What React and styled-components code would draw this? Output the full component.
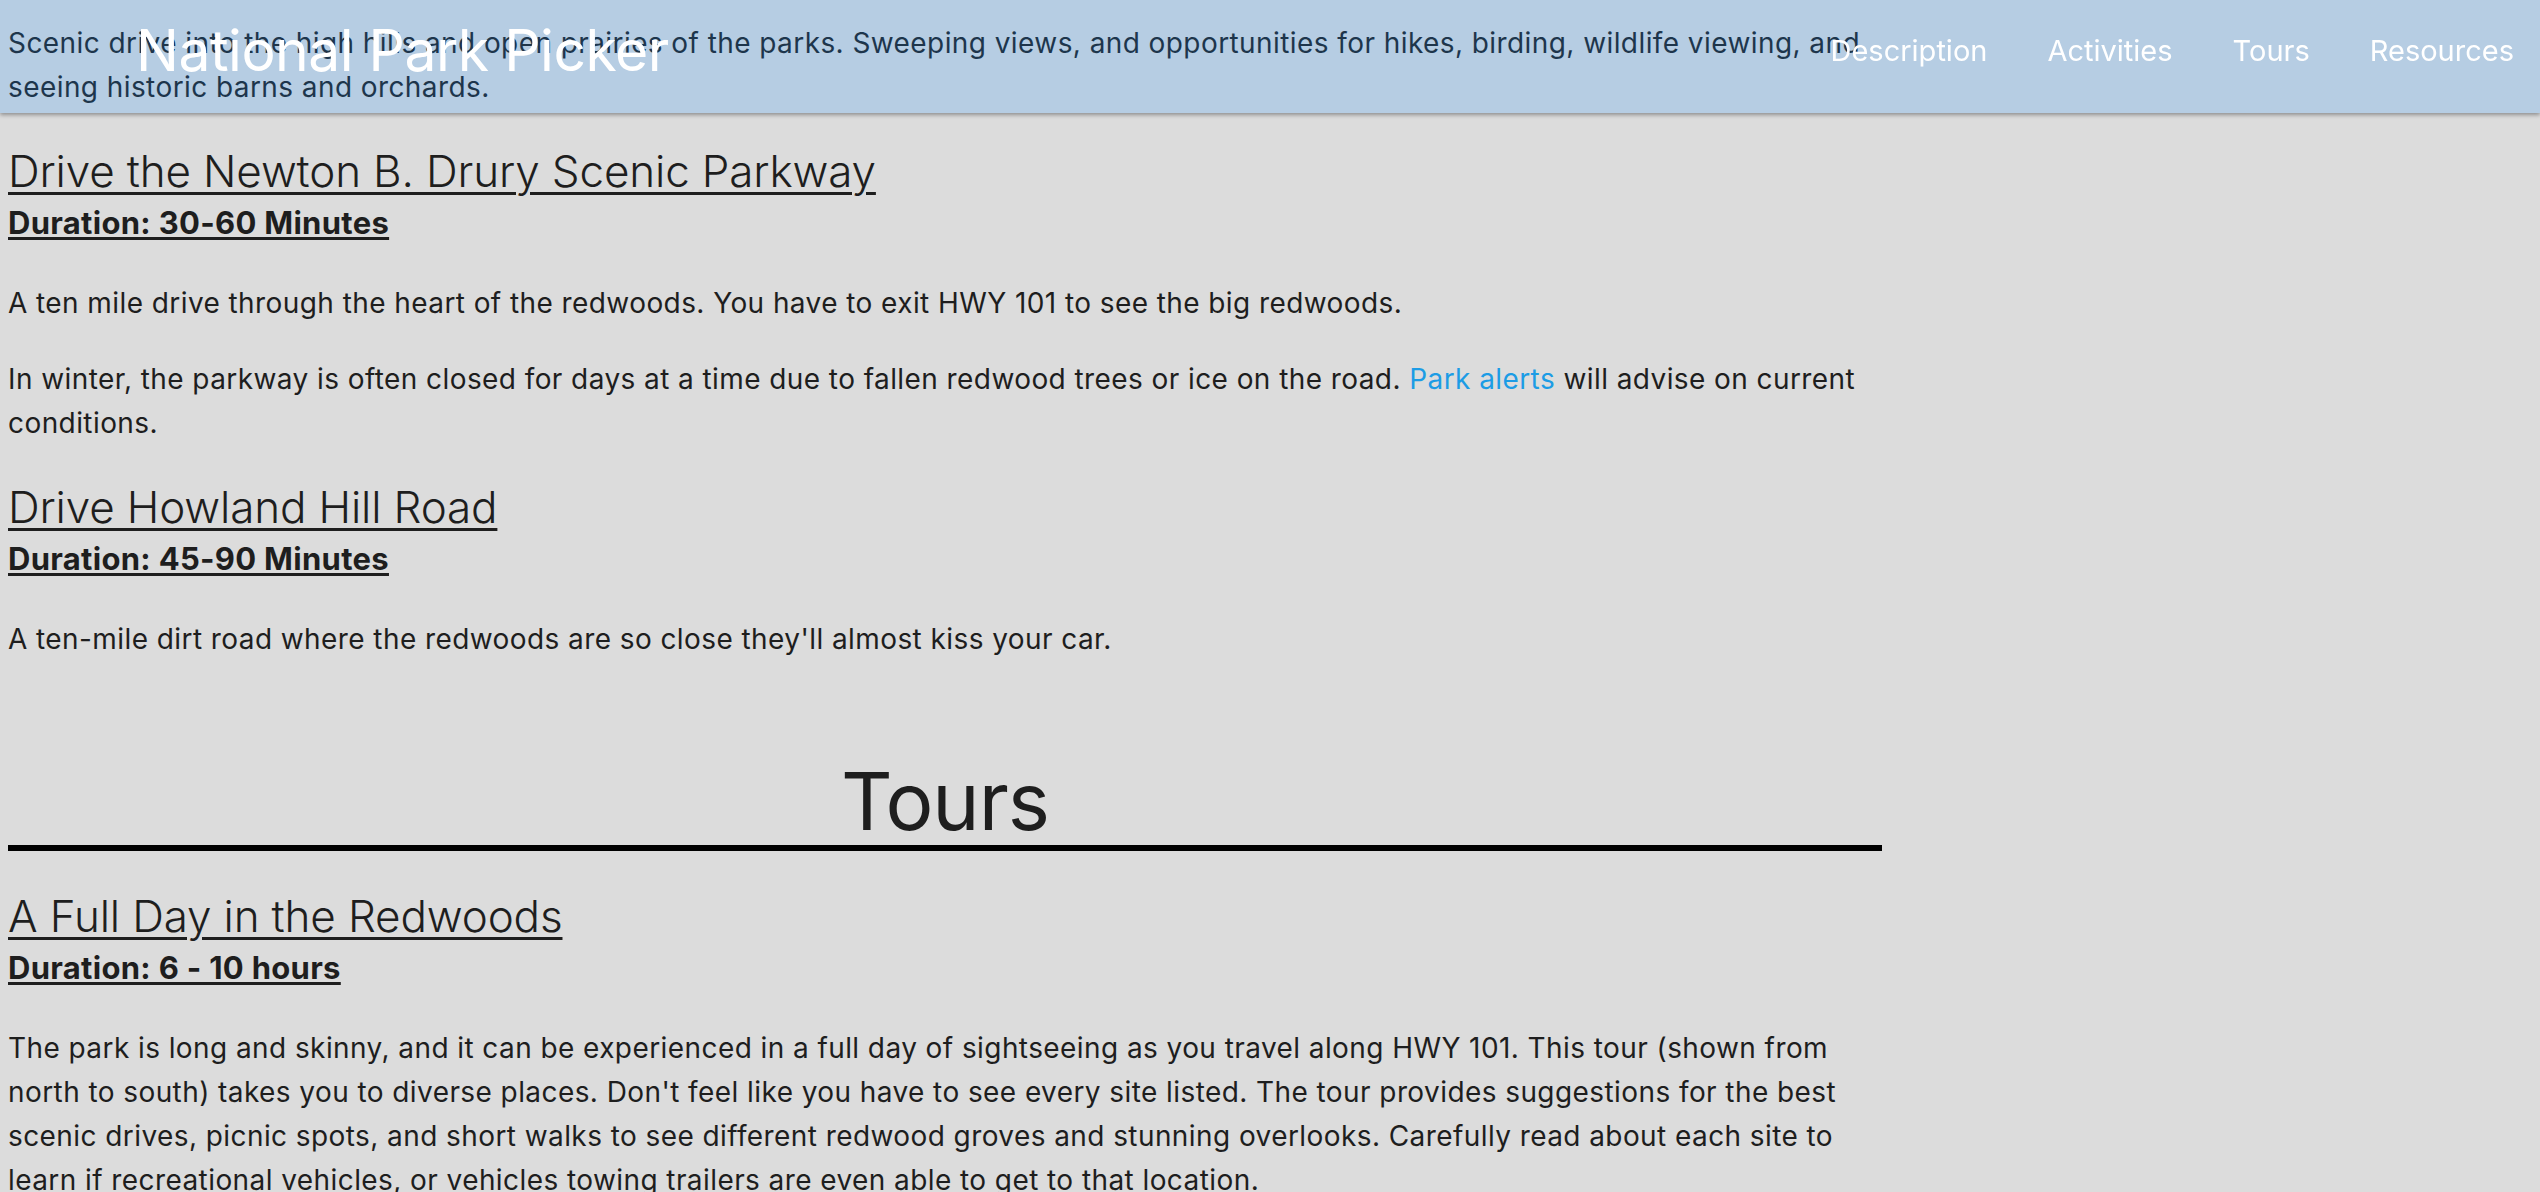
import React from "react";
import styled, { createGlobalStyle } from "styled-components";

const GlobalStyle = createGlobalStyle`
  html, body {
    background: #dcdcdc;
  }
  body {
    margin: 8px;
    font-family: Inter, "Noto Sans", sans-serif;
    color: #1e1e1e;
  }
`;

const Header = styled.header`
  position: fixed;
  top: 0;
  left: 0;
  right: 0;
  height: 113px;
  box-sizing: border-box;
  padding: 0 26px 12px 136px;
  display: flex;
  align-items: center;
  justify-content: space-between;
  background: rgba(30, 144, 255, 0.2);
  box-shadow: 0 2px 4px rgba(0, 0, 0, 0.35);
  z-index: 10;
`;

const Brand = styled.div`
  color: #ffffff;
  font-size: 57px;
  font-weight: 400;
  line-height: 1;
  letter-spacing: -0.5px;
`;

const Nav = styled.nav`
  display: flex;
  gap: 60px;
`;

const NavLink = styled.a`
  color: #ffffff;
  font-size: 29px;
  font-weight: 400;
  text-decoration: none;
  line-height: 1;
`;

const Main = styled.main`
  width: 1874px;
  padding-top: 13px;
  display: flex;
  flex-direction: column;
`;

const Para = styled.p`
  margin: 0;
  font-size: 28px;
  line-height: 44px;
  letter-spacing: 0.42px;
  & + & {
    margin-top: 32px;
  }
`;

const Item = styled.section`
  display: flex;
  flex-direction: column;
  margin-top: ${(p) => p.$top}px;
`;

const ItemTitle = styled.h2`
  margin: 0;
  font-size: 44px;
  line-height: 54px;
  font-weight: 300;
  letter-spacing: -0.15px;
  color: #1e1e1e;
  text-decoration: underline;
  text-decoration-thickness: 3px;
  text-underline-offset: 5px;
`;

const Duration = styled.h3`
  margin: 7px 0 0;
  font-size: 31px;
  line-height: 36px;
  font-weight: 700;
  letter-spacing: 0.3px;
  text-decoration: underline;
  text-decoration-thickness: 3px;
  text-underline-offset: 3px;
`;

const Body = styled.div`
  margin-top: 40px;
  display: flex;
  flex-direction: column;
`;

const SectionTitle = styled.h1`
  margin: 96px 0 0;
  font-size: 80px;
  line-height: 88px;
  font-weight: 400;
  letter-spacing: -1px;
  text-align: center;
  border-bottom: 6px solid #000;
`;

const Link = styled.a`
  color: #1c9ce5;
  text-decoration: none;
`;

const activities = [
  {
    title: "Drive the Newton B. Drury Scenic Parkway",
    duration: "Duration: 30-60 Minutes",
    paras: [
      "A ten mile drive through the heart of the redwoods. You have to exit HWY 101 to see the big redwoods.",
      <>
        In winter, the parkway is often closed for days at a time due to fallen redwood trees or ice on the road.{" "}
        <Link href="#">Park alerts</Link> will advise on current conditions.
      </>,
    ],
  },
  {
    title: "Drive Howland Hill Road",
    duration: "Duration: 45-90 Minutes",
    paras: [
      "A ten-mile dirt road where the redwoods are so close they'll almost kiss your car.",
    ],
  },
];

const tours = [
  {
    title: "A Full Day in the Redwoods",
    duration: "Duration: 6 - 10 hours",
    paras: [
      "The park is long and skinny, and it can be experienced in a full day of sightseeing as you travel along HWY 101. This tour (shown from north to south) takes you to diverse places. Don't feel like you have to see every site listed. The tour provides suggestions for the best scenic drives, picnic spots, and short walks to see different redwood groves and stunning overlooks. Carefully read about each site to learn if recreational vehicles, or vehicles towing trailers are even able to get to that location.",
    ],
  },
];

function Entry({ item, top }) {
  return (
    <Item $top={top}>
      <ItemTitle>{item.title}</ItemTitle>
      <Duration>{item.duration}</Duration>
      <Body>
        {item.paras.map((p, i) => (
          <Para key={i}>{p}</Para>
        ))}
      </Body>
    </Item>
  );
}

export default function App() {
  return (
    <>
      <GlobalStyle />
      <Header>
        <Brand>National Park Picker</Brand>
        <Nav>
          <NavLink href="#">Description</NavLink>
          <NavLink href="#">Activities</NavLink>
          <NavLink href="#">Tours</NavLink>
          <NavLink href="#">Resources</NavLink>
        </Nav>
      </Header>
      <Main>
        <Para>
          Scenic drive into the high hills and open prairies of the parks. Sweeping views, and opportunities for hikes, birding, wildlife viewing, and seeing historic barns and orchards.
        </Para>
        {activities.map((a) => (
          <Entry key={a.title} item={a} top={35} />
        ))}
        <SectionTitle>Tours</SectionTitle>
        {tours.map((t) => (
          <Entry key={t.title} item={t} top={38} />
        ))}
      </Main>
    </>
  );
}
